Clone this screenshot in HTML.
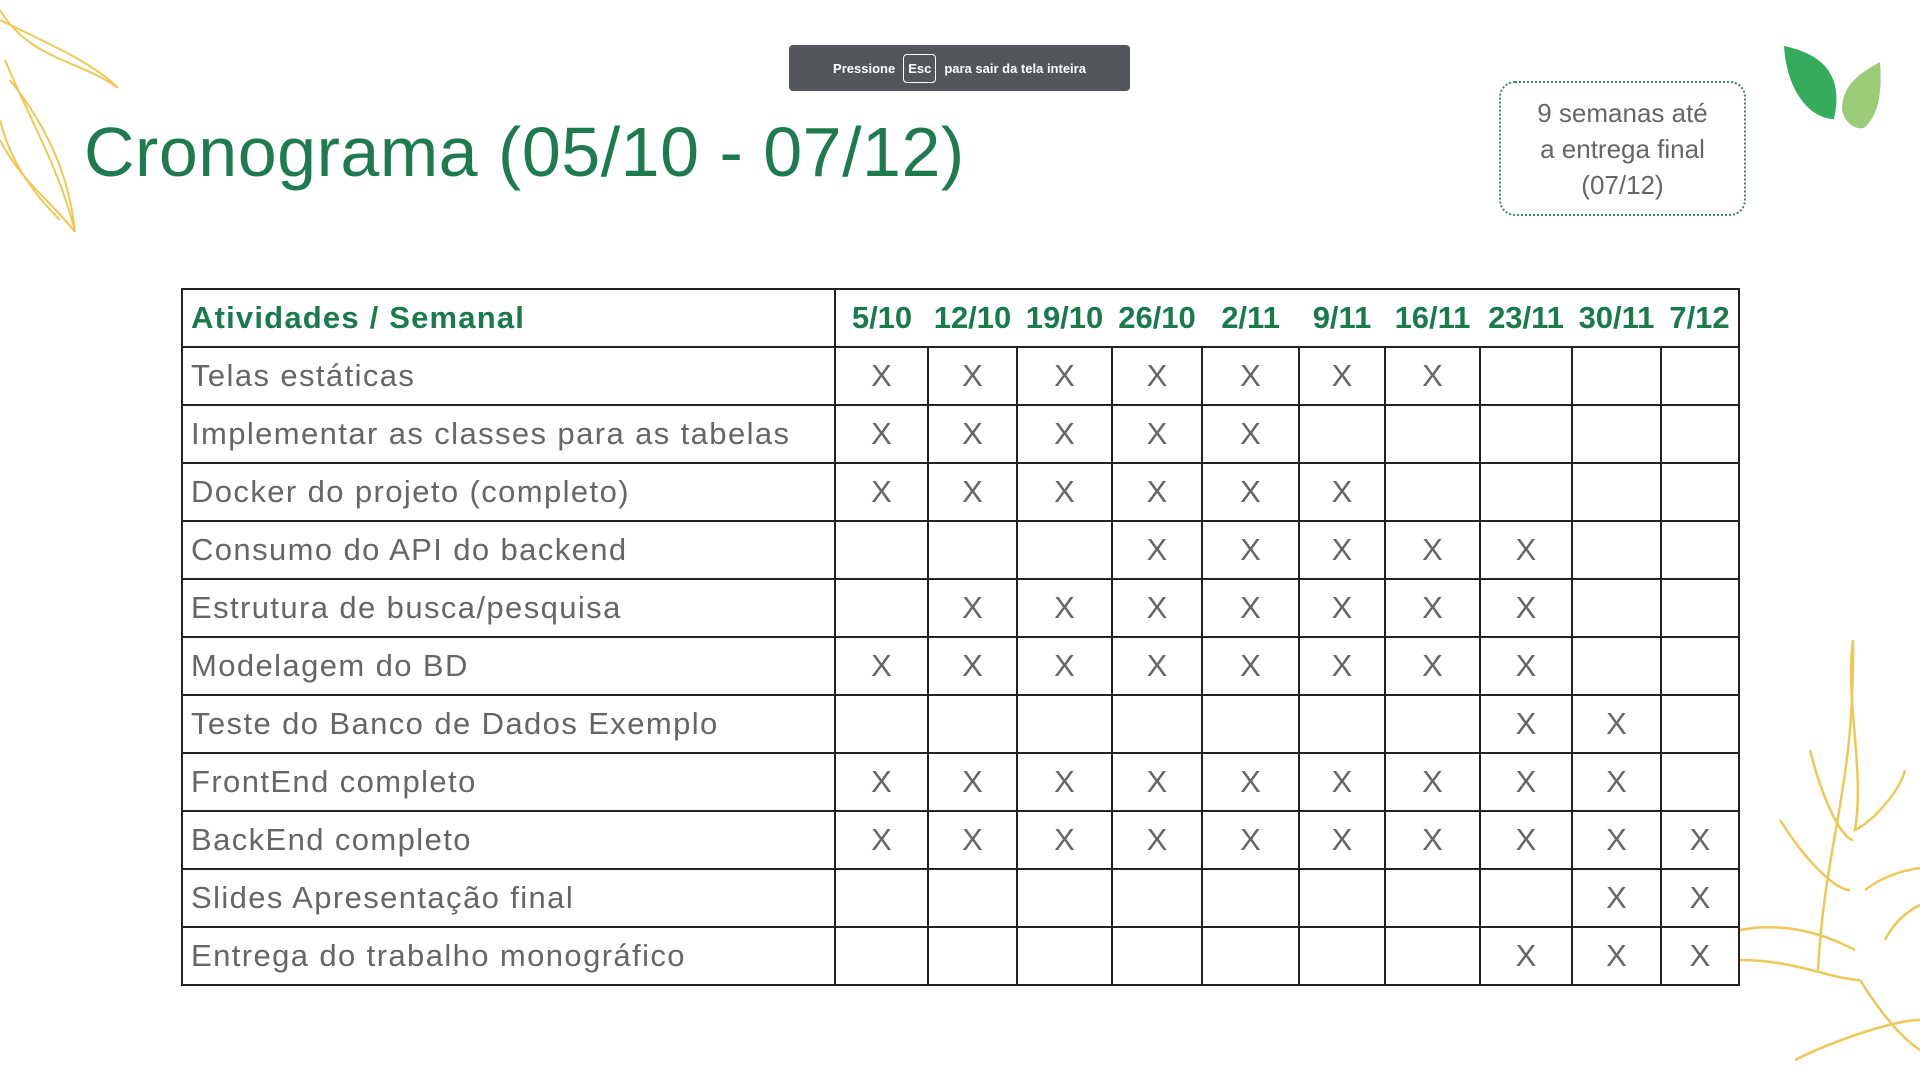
<!DOCTYPE html>
<html><head><meta charset="utf-8"><style>
html,body{margin:0;padding:0;background:#fff;width:1920px;height:1080px;overflow:hidden;position:relative;font-family:"Liberation Sans",sans-serif}
.title{position:absolute;left:84px;top:112px;font-size:70px;color:#1f7a50;letter-spacing:0.5px;white-space:nowrap}
.toast{position:absolute;left:789px;top:45px;width:341px;height:46px;background:#53565a;border-radius:4px;color:#fff;font-size:13px;font-weight:bold;display:flex;align-items:center;justify-content:center;gap:8px}
.toast span.k{border:1px solid #fff;border-radius:4px;padding:6px 4px}
.box{position:absolute;left:1499px;top:81px;width:243px;height:131px;border:2px dotted #3a8a6a;border-radius:16px;color:#666;font-size:26px;text-align:center;line-height:36px;display:flex;align-items:center;justify-content:center}
table{position:absolute;left:181px;top:288px;border-collapse:collapse;table-layout:fixed;width:1557px}
td{border:2px solid #222;height:56px;padding:0;font-size:31px;color:#666;text-align:center}
td.a{text-align:left;padding-left:8px;letter-spacing:1.4px;white-space:nowrap}
tr.h td{color:#1a7a4c;font-weight:bold;font-size:31px;height:56px}
tr.h td.a{letter-spacing:1.2px}
tr.h td.d{border-left:none;border-right:none}
tr.h td.d:last-child{border-right:2px solid #222}
</style></head><body>
<svg style="position:absolute;left:0;top:0" width="130" height="240" viewBox="0 0 130 240" fill="none" stroke="#ecc85a" stroke-width="2">
<path d="M0 10 C30 60 80 60 118 88"/><path d="M0 20 C40 40 90 60 118 88"/><path d="M5 60 C30 120 60 170 75 232"/><path d="M10 80 C50 130 70 180 75 232"/><path d="M0 140 C20 180 50 200 75 232"/><path d="M0 120 C10 160 30 190 60 220"/>
</svg>
<svg style="position:absolute;left:1735px;top:640px" width="185" height="440" viewBox="0 0 185 440" fill="none" stroke="#ecc85a" stroke-width="2.5">
<path d="M83 330 C90 200 120 150 118 0"/>
<path d="M118 0 C110 60 130 130 120 190 C140 180 165 150 170 130"/>
<path d="M75 110 C90 170 110 200 118 200"/>
<path d="M45 180 C70 220 100 250 115 250"/>
<path d="M5 290 C60 280 100 300 120 310"/>
<path d="M5 320 C60 320 100 340 125 340"/>
<path d="M130 250 C150 235 170 230 185 228"/>
<path d="M150 300 C160 280 175 270 185 265"/>
<path d="M60 420 C100 400 160 380 185 380"/>
<path d="M125 340 C150 380 170 400 185 410"/>
</svg>
<svg style="position:absolute;left:1782px;top:44px" width="102" height="88" viewBox="0 0 102 88">
<path d="M2 2 C40 10 62 30 52 75 C30 75 5 50 2 2Z" fill="#35ab5c"/>
<path d="M98 18 C80 28 60 40 60 65 C62 80 75 86 82 84 C98 70 100 45 98 18Z" fill="#9dcc78"/>
</svg>
<div class="title">Cronograma (05/10 - 07/12)</div>
<div class="toast">Pressione <span class="k">Esc</span> para sair da tela inteira</div>
<div class="box">9 semanas até<br>a entrega final<br>(07/12)</div>
<table>
<colgroup><col style="width:653px"><col style="width:93px"><col style="width:89px"><col style="width:95px"><col style="width:90px"><col style="width:97px"><col style="width:86px"><col style="width:95px"><col style="width:92px"><col style="width:89px"><col style="width:78px"></colgroup>
<tr class="h"><td class="a">Atividades / Semanal</td><td class="d">5/10</td><td class="d">12/10</td><td class="d">19/10</td><td class="d">26/10</td><td class="d">2/11</td><td class="d">9/11</td><td class="d">16/11</td><td class="d">23/11</td><td class="d">30/11</td><td class="d">7/12</td></tr>
<tr><td class="a">Telas estáticas</td><td>X</td><td>X</td><td>X</td><td>X</td><td>X</td><td>X</td><td>X</td><td></td><td></td><td></td></tr>
<tr><td class="a">Implementar as classes para as tabelas</td><td>X</td><td>X</td><td>X</td><td>X</td><td>X</td><td></td><td></td><td></td><td></td><td></td></tr>
<tr><td class="a">Docker do projeto (completo)</td><td>X</td><td>X</td><td>X</td><td>X</td><td>X</td><td>X</td><td></td><td></td><td></td><td></td></tr>
<tr><td class="a">Consumo do API do backend</td><td></td><td></td><td></td><td>X</td><td>X</td><td>X</td><td>X</td><td>X</td><td></td><td></td></tr>
<tr><td class="a">Estrutura de busca/pesquisa</td><td></td><td>X</td><td>X</td><td>X</td><td>X</td><td>X</td><td>X</td><td>X</td><td></td><td></td></tr>
<tr><td class="a">Modelagem do BD</td><td>X</td><td>X</td><td>X</td><td>X</td><td>X</td><td>X</td><td>X</td><td>X</td><td></td><td></td></tr>
<tr><td class="a">Teste do Banco de Dados Exemplo</td><td></td><td></td><td></td><td></td><td></td><td></td><td></td><td>X</td><td>X</td><td></td></tr>
<tr><td class="a">FrontEnd completo</td><td>X</td><td>X</td><td>X</td><td>X</td><td>X</td><td>X</td><td>X</td><td>X</td><td>X</td><td></td></tr>
<tr><td class="a">BackEnd completo</td><td>X</td><td>X</td><td>X</td><td>X</td><td>X</td><td>X</td><td>X</td><td>X</td><td>X</td><td>X</td></tr>
<tr><td class="a">Slides Apresentação final</td><td></td><td></td><td></td><td></td><td></td><td></td><td></td><td></td><td>X</td><td>X</td></tr>
<tr><td class="a">Entrega do trabalho monográfico</td><td></td><td></td><td></td><td></td><td></td><td></td><td></td><td>X</td><td>X</td><td>X</td></tr>
</table>
</body></html>
